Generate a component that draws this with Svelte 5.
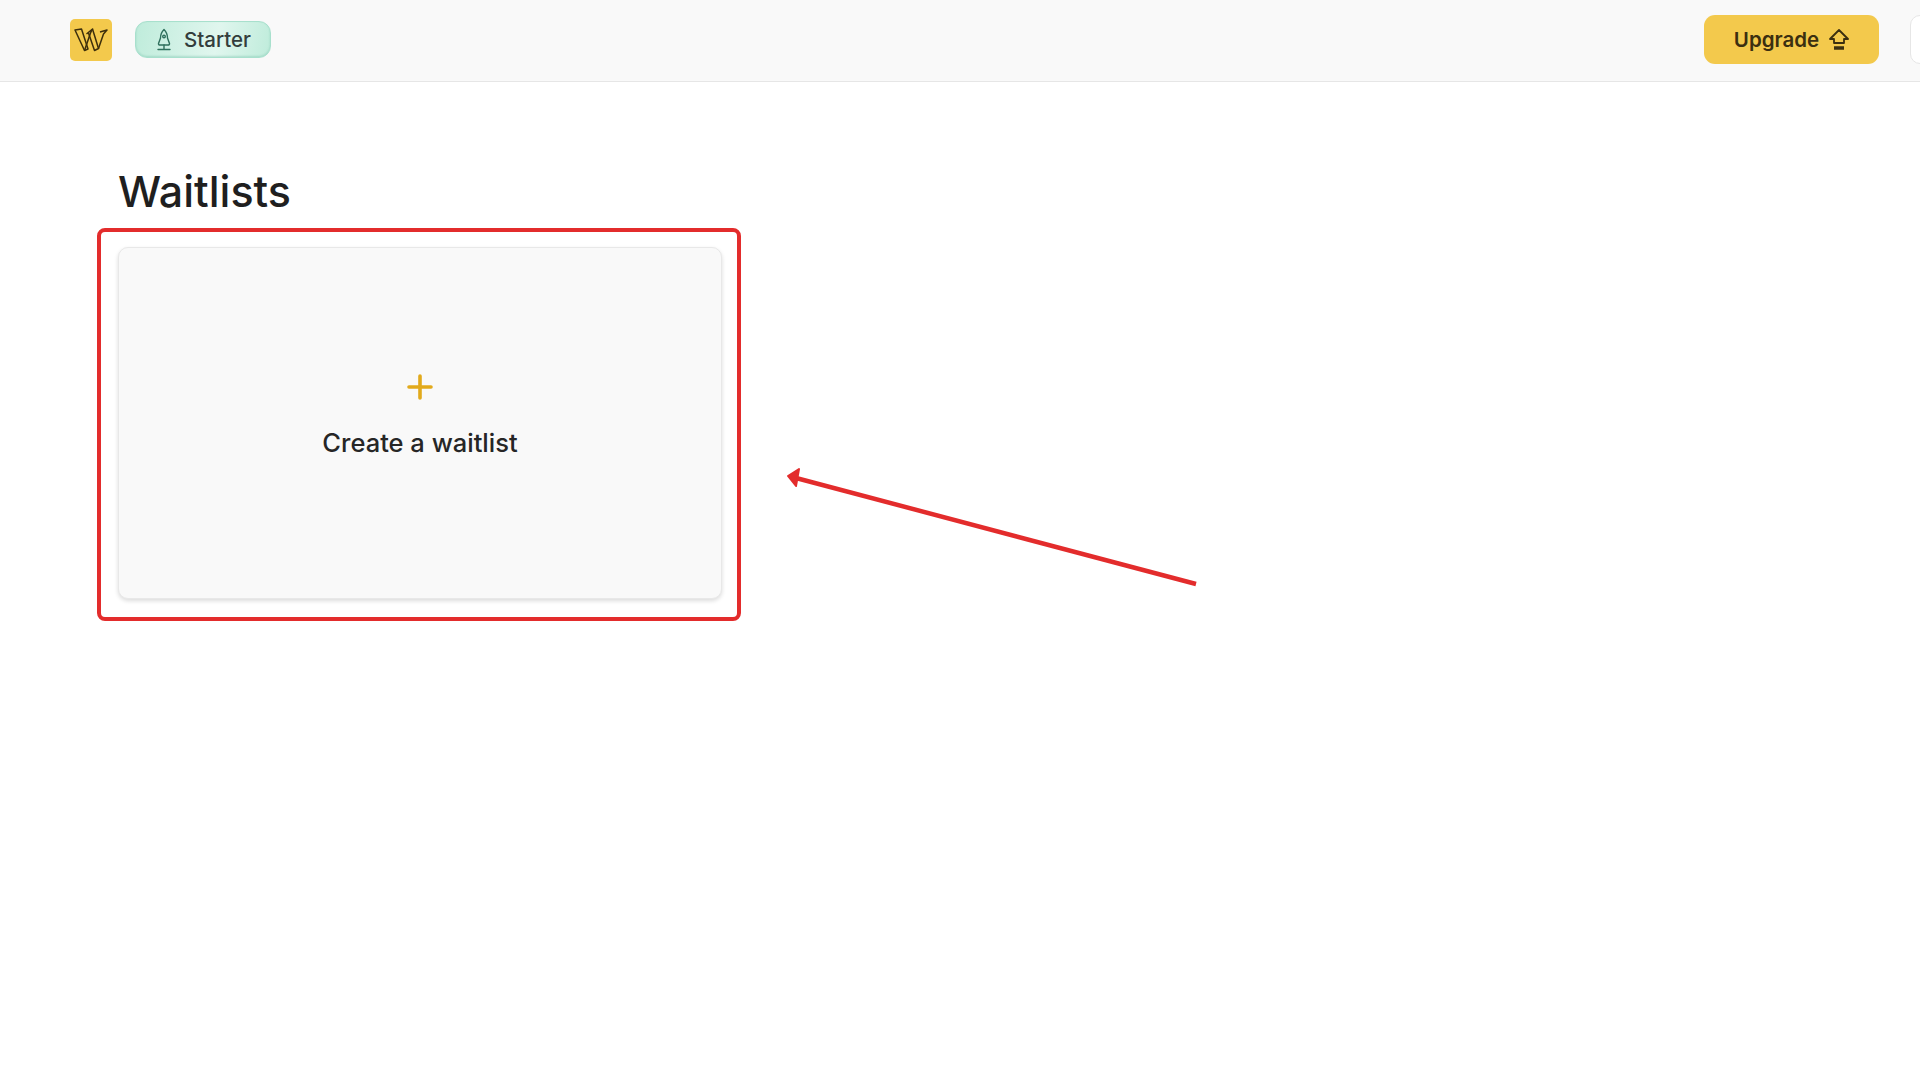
<script>
  const title = 'Waitlists';
</script>

<header class="topbar">
  <div class="left">
    <div class="logo">
      <svg width="34" height="25" viewBox="0 0 34 25" fill="none" stroke="#3d2f0c" stroke-width="1.5" stroke-linejoin="round">
        <path d="M1 3 L7.5 2 L14 22 L10.5 23.5 Z" />
        <path d="M10.5 23.5 L16.5 6 L18.5 2 L12.5 7" />
        <path d="M18.5 2 L24.5 21.5 L20.5 23.5 L14.5 6" />
        <path d="M24.5 21.5 L29.5 7 L33 3 L26 5" />
      </svg>
    </div>
    <div class="plan">
      <svg width="18" height="24" viewBox="0 0 18 24" fill="none" stroke="#2f6f5c" stroke-width="1.4" stroke-linejoin="round" stroke-linecap="round">
        <path d="M9 1.5 C6.5 4 5.5 7 5.5 10 L3.5 15.5 C3.3 16.5 4 17 5 17 H13 C14 17 14.7 16.5 14.5 15.5 L12.5 10 C12.5 7 11.5 4 9 1.5 Z" />
        <circle cx="9" cy="8.5" r="1.3" />
        <path d="M3 21.5 H15 M9 17 V21.5" />
      </svg>
      <span>Starter</span>
    </div>
  </div>
  <div class="right">
    <button class="upgrade">
      <span>Upgrade</span>
      <svg width="20" height="24" viewBox="0 0 20 24" fill="none" stroke="#3b2f10" stroke-width="1.8" stroke-linejoin="round">
        <path d="M10 2 L19 11 H15 V15 H5 V11 H1 Z" />
        <path d="M5 20 H15" stroke-width="3.5" />
      </svg>
    </button>
    <div class="avatar"></div>
  </div>
</header>

<main class="page">
  <h1>{title}</h1>
  <div class="highlight">
    <button class="create">
      <svg width="28" height="28" viewBox="0 0 28 28" stroke="#e2aa1c" stroke-width="3.6" stroke-linecap="round">
        <path d="M14 3 V25 M3 14 H25" />
      </svg>
      <span>Create a waitlist</span>
    </button>
  </div>
</main>

<svg class="arrow" width="1920" height="1080" viewBox="0 0 1920 1080" fill="none">
  <path d="M1196 584 L796 478" stroke="#e32c2c" stroke-width="4.5" />
  <path d="M788 476 L799 469 L796 486 Z" fill="#e32c2c" stroke="#e32c2c" stroke-width="2" stroke-linejoin="round" />
</svg>

<style>
  :global(body) {
    background: #fff;
    font-family: "Inter", "Liberation Sans", sans-serif;
    color: #222;
    overflow: hidden;
  }

  .topbar {
    height: 82px;
    box-sizing: border-box;
    background: #f9f9f9;
    border-bottom: 1px solid #e6e6e6;
    display: flex;
    align-items: center;
    justify-content: space-between;
    padding: 0 0 2px 70px;
  }

  .left, .right {
    display: flex;
    align-items: center;
  }

  .left {
    gap: 23px;
  }

  .logo {
    width: 42px;
    height: 42px;
    background: #f3c94c;
    border-radius: 5px;
    display: flex;
    align-items: center;
    justify-content: center;
  }

  .plan {
    width: 136px;
    height: 37px;
    box-sizing: border-box;
    border: 1px solid #a8e0cd;
    border-radius: 12px;
    background: linear-gradient(100deg, #bfecdb, #e0f6ee 60%, #bfecdb);
    box-shadow: inset 0 -1px 2px rgba(60, 160, 130, 0.25);
    display: flex;
    align-items: center;
    justify-content: center;
    gap: 11px;
    font-size: 20.5px;
    font-weight: 500;
    color: #333d3c;
  }

  .upgrade {
    width: 175px;
    height: 49px;
    border: none;
    border-radius: 11px;
    background: #f3c94c;
    color: #3b2f10;
    font: 600 20.5px "Inter", "Liberation Sans", sans-serif;
    display: flex;
    align-items: center;
    justify-content: center;
    gap: 10px;
    padding: 0;
  }

  .avatar {
    width: 40px;
    height: 49px;
    margin-left: 31px;
    margin-right: -30px;
    box-sizing: border-box;
    background: #fff;
    border: 1px solid #e6e6e6;
    border-radius: 10px;
  }

  .page {
    padding: 85px 0 0 97px;
  }

  h1 {
    margin: 0 0 13px 21px;
    font-size: 43px;
    line-height: 48px;
    font-weight: 550;
    color: #1f1f1f;
  }

  .highlight {
    width: 644px;
    height: 393px;
    box-sizing: border-box;
    border: 4px solid #e32c2c;
    border-radius: 8px;
    padding: 15px 15px 18px 17px;
  }

  .create {
    width: 100%;
    height: 100%;
    box-sizing: border-box;
    background: #f9f9f9;
    border: 1px solid #e8e8e8;
    border-radius: 10px;
    box-shadow: 0 2px 4px rgba(0, 0, 0, 0.14);
    display: flex;
    flex-direction: column;
    align-items: center;
    padding: 125px 0 0;
    gap: 26px;
    font: 550 25.5px "Inter", "Liberation Sans", sans-serif;
    color: #262626;
  }

  .arrow {
    position: absolute;
    left: 0;
    top: 0;
    pointer-events: none;
  }
</style>
